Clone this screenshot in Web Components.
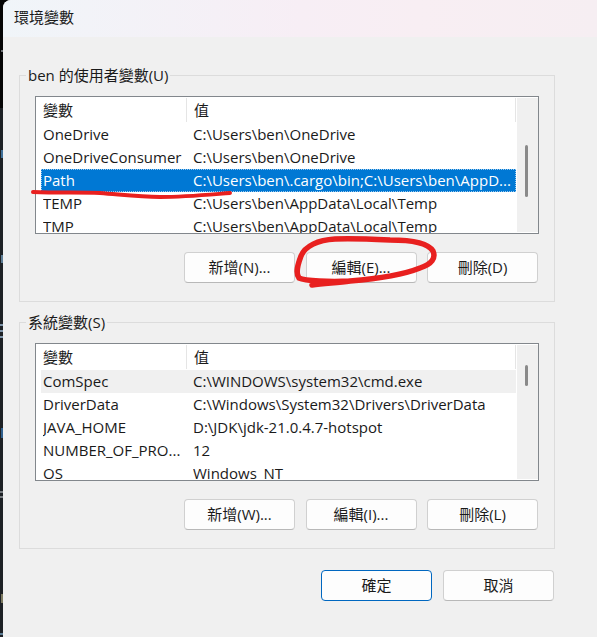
<!DOCTYPE html>
<html lang="zh-Hant">
<head>
<meta charset="utf-8">
<title>環境變數</title>
<style>
  html, body { margin: 0; height: 100%; background: #f0f0f0; }
  body {
    width: 597px;
    height: 637px;
    overflow: hidden;
    font-family: "Open Sans", "Noto Sans CJK TC", sans-serif;
    font-size: 15px;
    color: #1a1a1a;
  }
  env-row[selected] { --row-bg: #0078d4; --row-color: #ffffff; }
</style>
</head>
<body>

<template id="dialog-tpl">
  <style>
    :host {
      display: block;
      position: relative;
      height: 637px;
      box-sizing: border-box;
      padding-left: 3px;
      background: linear-gradient(180deg, #050505 0, #050505 108px, #1d2125 108px);
    }
    .win {
      height: 100%;
      background: #f0f0f0;
      border-top-left-radius: 8px;
      overflow: hidden;
    }
    .title {
      height: 37px;
      box-sizing: border-box;
      padding: 9px 0 0 11px;
      line-height: 17px;
      background: linear-gradient(90deg, #f0f5f9 0%, #f7eef5 50%, #f8eef3 70%, #f6eef2 100%);
    }
    .body {
      display: flex;
      flex-direction: column;
      padding: 38px 42px 0 16px;
      gap: 20px;
    }
    .foot {
      display: flex;
      justify-content: flex-end;
      gap: 11px;
      padding: 1px 1px 0 0;
    }
    svg {
      position: absolute;
      left: 0;
      top: 0;
      pointer-events: none;
    }
  </style>
  <div class="win">
    <div class="title"><slot name="title"></slot></div>
    <div class="body">
      <slot></slot>
      <div class="foot"><slot name="foot"></slot></div>
    </div>
  </div>
  <!-- bits of the window behind, showing in the strip on the left -->
  <svg width="3" height="637">
    <rect x="1" y="50" width="2" height="2" fill="#6a6e72"/>
    <rect x="1" y="150" width="2" height="8" fill="#3f6f98"/>
    <rect x="1" y="255" width="2" height="8" fill="#5d7d95"/>
    <rect x="0" y="324" width="3" height="2" fill="#7d93a8"/>
    <rect x="0" y="330" width="3" height="2" fill="#7d93a8"/>
    <rect x="0" y="336" width="3" height="2" fill="#7d93a8"/>
    <rect x="1" y="428" width="2" height="10" fill="#2f5f8c"/>
    <rect x="0" y="491" width="3" height="2" fill="#777b7f"/>
    <rect x="0" y="496" width="3" height="2" fill="#777b7f"/>
    <rect x="1" y="594" width="2" height="9" fill="#7d7a60"/>
    <rect x="0" y="633" width="3" height="2" fill="#5d7d95"/>
  </svg>
  <!-- the red marker strokes drawn over the screenshot -->
  <svg width="597" height="637" fill="none" stroke="#e8201f" stroke-linecap="round" stroke-linejoin="round">
    <path stroke-width="4" d="M33 192 C60 193 80 192 100 193 C125 195 140 197 160 197 C185 197 205 195 230 193"/>
    <path stroke-width="5.5" d="M312 285 C325 283 338 283 350 281 C375 279 400 276 420 268 C432 264 436 258 433 251 C428 243 410 240 390 240 C370 239 350 238 335 239 C318 240 305 246 301 256 C298 264 295 273 299 278 C305 281 330 282 350 281"/>
  </svg>
</template>

<template id="group-tpl">
  <style>
    :host {
      display: block;
      position: relative;
      box-sizing: border-box;
      width: 536px;
      height: 227px;
      border: 1px solid #dcdcdc;
      padding: 20px 15px 0 15px;
    }
    .legend {
      position: absolute;
      left: 6px;
      top: -11px;
      padding: 0 2px;
      line-height: 20px;
      background: #f0f0f0;
    }
    .btns {
      display: flex;
      justify-content: flex-end;
      gap: 10.5px;
      margin-top: 18px;
      padding-right: 1px;
    }
  </style>
  <div class="legend"><slot name="legend"></slot></div>
  <slot></slot>
  <div class="btns"><slot name="btn"></slot></div>
</template>

<template id="list-tpl">
  <style>
    :host {
      display: block;
      box-sizing: border-box;
      height: 138px;
      border: 1px solid #82878c;
      background: #fff;
      overflow: hidden;
    }
    .wrap { display: flex; height: 100%; }
    .rows {
      flex: 1;
      min-width: 0;
      padding: 1px 0 0 5px;
      overflow: hidden;
    }
    .head {
      display: grid;
      grid-template-columns: 145px 1fr;
      height: 25px;
      line-height: 24px;
    }
    .head div { padding-left: 2px; height: 24px; }
    .head div + div {
      border-left: 1px solid #e5e5e5;
      border-right: 1px solid #e5e5e5;
      padding-left: 7px;
    }
    .bar {
      position: relative;
      width: 21px;
      margin: 1px 0 1px 1px;
      background: #f0f0f0;
    }
    .thumb {
      position: absolute;
      left: 8px;
      width: 3px;
      top: var(--thumb-top, 47px);
      height: var(--thumb-h, 52px);
      border-radius: 2px;
      background: #8a8a8a;
    }
  </style>
  <div class="wrap">
    <div class="rows">
      <div class="head"><div>變數</div><div>值</div></div>
      <slot></slot>
    </div>
    <div class="bar"><div class="thumb"></div></div>
  </div>
</template>

<template id="row-tpl">
  <style>
    :host {
      display: grid;
      grid-template-columns: 150px 1fr;
      height: 23px;
      line-height: 23px;
      padding-left: 2px;
      white-space: nowrap;
      overflow: hidden;
      background: var(--row-bg, transparent);
      color: var(--row-color, inherit);
    }
    :host([selected]) { outline: 1px dotted #9cc9ec; outline-offset: -1px; }
    :host([hover]) { background: #f0f0f0; }
    .name { overflow: hidden; }
    .val { overflow: hidden; }
  </style>
  <div class="name"><slot name="name"></slot></div>
  <div class="val"><slot name="val"></slot></div>
</template>

<template id="btn-tpl">
  <style>
    :host {
      display: block;
      box-sizing: border-box;
      width: 111px;
      height: 31px;
      line-height: 29px;
      text-align: center;
      background: #fdfdfd;
      border: 1px solid #d0d0d0;
      border-bottom-color: #b8b8b8;
      border-radius: 4px;
    }
    :host([primary]) { border: 1px solid #0067c0; }
  </style>
  <slot></slot>
</template>

<script>
  // same small boilerplate for every element: clone its template in an open root
  function define(tag, tplId) {
    customElements.define(tag, class extends HTMLElement {
      constructor() {
        super();
        const shadow = this.attachShadow({ mode: "open" });
        shadow.appendChild(document.getElementById(tplId).content.cloneNode(true));
      }
    });
  }
  define("env-dialog", "dialog-tpl");
  define("env-group", "group-tpl");
  define("env-list", "list-tpl");
  define("env-row", "row-tpl");
  define("env-button", "btn-tpl");
</script>

<env-dialog>
  <span slot="title">環境變數</span>

  <env-group>
    <span slot="legend">ben 的使用者變數(U)</span>
    <env-list>
      <env-row><span slot="name">OneDrive</span><span slot="val">C:\Users\ben\OneDrive</span></env-row>
      <env-row><span slot="name">OneDriveConsumer</span><span slot="val">C:\Users\ben\OneDrive</span></env-row>
      <env-row selected><span slot="name">Path</span><span slot="val">C:\Users\ben\.cargo\bin;C:\Users\ben\AppD...</span></env-row>
      <env-row><span slot="name">TEMP</span><span slot="val">C:\Users\ben\AppData\Local\Temp</span></env-row>
      <env-row><span slot="name">TMP</span><span slot="val">C:\Users\ben\AppData\Local\Temp</span></env-row>
    </env-list>
    <env-button slot="btn">新增(N)...</env-button>
    <env-button slot="btn">編輯(E)...</env-button>
    <env-button slot="btn">刪除(D)</env-button>
  </env-group>

  <env-group>
    <span slot="legend">系統變數(S)</span>
    <env-list style="--thumb-top: 20px; --thumb-h: 21px">
      <env-row hover><span slot="name">ComSpec</span><span slot="val">C:\WINDOWS\system32\cmd.exe</span></env-row>
      <env-row><span slot="name">DriverData</span><span slot="val">C:\Windows\System32\Drivers\DriverData</span></env-row>
      <env-row><span slot="name">JAVA_HOME</span><span slot="val">D:\JDK\jdk-21.0.4.7-hotspot</span></env-row>
      <env-row><span slot="name">NUMBER_OF_PRO...</span><span slot="val">12</span></env-row>
      <env-row><span slot="name">OS</span><span slot="val">Windows_NT</span></env-row>
    </env-list>
    <env-button slot="btn">新增(W)...</env-button>
    <env-button slot="btn">編輯(I)...</env-button>
    <env-button slot="btn">刪除(L)</env-button>
  </env-group>

  <env-button slot="foot" primary>確定</env-button>
  <env-button slot="foot">取消</env-button>
</env-dialog>

</body>
</html>
